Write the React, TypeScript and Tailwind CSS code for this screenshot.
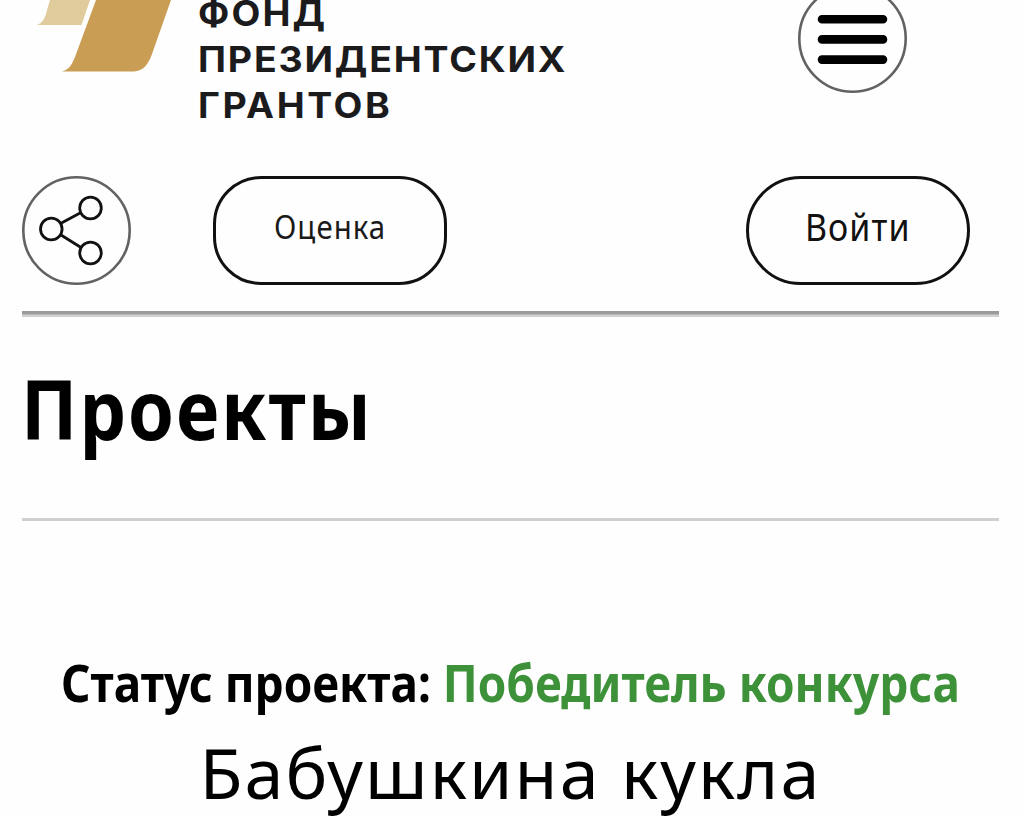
function LogoMark() {
  return (
    <svg width="152" height="74" viewBox="22 0 152 74" className="shrink-0" aria-hidden="true">
      <path d="M50 0H90L81.5 25H37Q45 22 47 10Z" fill="#e0cb9c" />
      <path d="M96 0H171L152 54C148 65 143 71 134 71.5H62C70 69 72 64 75 57Z" fill="#c99d54" />
    </svg>
  );
}

function MenuIcon() {
  return (
    <svg width="109" height="109" viewBox="0 0 109 109" fill="none" aria-hidden="true">
      <circle cx="54.5" cy="54.5" r="53.2" stroke="#626260" strokeWidth="2.6" />
      <path d="M24 35.3H85M24 55.4H85M24 75.6H85" stroke="#000" strokeWidth="8.6" strokeLinecap="round" />
    </svg>
  );
}

function ShareIcon() {
  return (
    <svg width="109" height="109" viewBox="0 0 109 109" fill="none" aria-hidden="true">
      <circle cx="54.5" cy="54.5" r="53.2" stroke="#626260" strokeWidth="2.6" />
      <g stroke="#111" strokeWidth="2.8">
        <circle cx="29.3" cy="53" r="10.8" />
        <circle cx="68.5" cy="32" r="10.8" />
        <circle cx="68.5" cy="77" r="10.8" />
        <path d="M39 47.2L59 36.5M39 59L59 71.5" />
      </g>
    </svg>
  );
}

export default function App() {
  return (
    <div className="h-[817px] w-[1024px] overflow-hidden bg-[#fefefe] pr-[25px] pl-[22px] font-['Noto_Sans',sans-serif] text-black">
      <header>
        <div className="flex h-44 items-start">
          <LogoMark />
          <div className="-mt-[10px] ml-6 flex w-[600px] flex-col items-start font-['Inter',sans-serif] text-[35px] leading-[46px] font-bold text-[#1b1b1d]">
            <span className="origin-left scale-x-[1.07] tracking-[2px]">ФОНД</span>
            <span className="origin-left scale-x-[1.07] tracking-[1.7px]">ПРЕЗИДЕНТСКИХ</span>
            <span className="origin-left scale-x-[1.07] tracking-[2.4px]">ГРАНТОВ</span>
          </div>
          <button className="-mt-4 h-[109px] w-[109px] shrink-0" aria-label="Меню">
            <MenuIcon />
          </button>
        </div>

        <div className="flex h-[109px]">
          <button className="h-[109px] w-[109px]" aria-label="Поделиться">
            <ShareIcon />
          </button>
          <button className="ml-[82px] flex h-[109px] w-[234px] items-center justify-center rounded-[48px] border-3 border-[#111] pb-2 text-[33px] text-[#1a1a1a]">
            <span className="scale-x-[0.89] tracking-[1.2px]">Оценка</span>
          </button>
          <button className="mr-[29px] ml-auto flex h-[109px] w-[224px] items-center justify-center rounded-full border-3 border-[#111] pb-2 text-[39px] text-[#111]">
            <span className="scale-x-[0.87] tracking-[1.3px]">Войти</span>
          </button>
        </div>
        <div className="mt-[26px] h-[6px] border-t-3 border-b-2 border-t-[#9b9b9b] border-b-[#d0d0d0] bg-[#b8b8b8]" />
      </header>

      <section className="h-[204px] border-b-3 border-[#d0d0d0] pt-[41px]">
        <h1 className="-ml-px origin-left scale-x-[0.89] text-[83px] leading-[100px] font-bold tracking-[2.2px]">Проекты</h1>
      </section>

      <section className="pt-[129px]">
        <p className="ml-[39px] origin-left scale-x-[0.883] text-[52px] leading-[64px] font-bold whitespace-nowrap">
          Статус проекта: <span className="text-[#3d9139]">Победитель конкурса</span>
        </p>
        <h2 className="mt-4 text-center text-[70px] leading-[84px] tracking-[2.1px]">Бабушкина кукла</h2>
      </section>
    </div>
  );
}
